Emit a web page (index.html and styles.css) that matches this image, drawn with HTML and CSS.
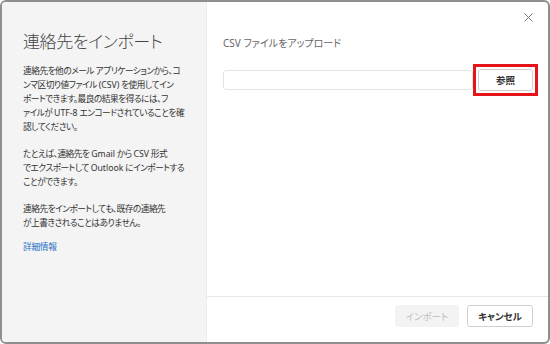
FILE: index.html
```html
<!DOCTYPE html>
<html lang="ja">
<head>
<meta charset="utf-8">
<title>連絡先をインポート</title>
<link rel="stylesheet" href="styles.css">
</head>
<body>
<div class="dialog">
  <aside class="side">
    <h1 class="title">連絡先をインポート</h1>
    <p class="para">連絡先を他のメール アプリケーションから、コ<br>ンマ区切り値ファイル <span class="lat">(CSV)</span> を使用してイン<br>ポートできます。最良の結果を得るには、フ<br>ァイルが <span class="lat">UTF-8</span> エンコードされていることを確<br>認してください。</p>
    <p class="para">たとえば、連絡先を <span class="lat">Gmail</span> から <span class="lat">CSV</span> 形式<br>でエクスポートして <span class="lat">Outlook</span> にインポートする<br>ことができます。</p>
    <p class="para">連絡先をインポートしても、既存の連絡先<br>が上書きされることはありません。</p>
    <a class="link" href="#">詳細情報</a>
  </aside>
  <main class="main">
    <div class="topbar">
      <button class="close" aria-label="閉じる">
        <svg width="9" height="9" viewBox="0 0 9 9"><path d="M0.5 0.5 L8.5 8.5 M8.5 0.5 L0.5 8.5" stroke="#7a7a7a" stroke-width="1" fill="none"/></svg>
      </button>
    </div>
    <div class="content">
      <div class="heading">CSV ファイルをアップロード</div>
      <div class="filerow">
        <div class="input"></div>
        <span class="highlight"><button class="btn browse">参照</button></span>
      </div>
    </div>
    <div class="footer">
      <button class="btn disabled">インポート</button>
      <button class="btn cancel">キャンセル</button>
    </div>
  </main>
</div>
</body>
</html>
```

FILE: styles.css
```css
* { box-sizing: border-box; }
html, body {
  margin: 0;
  padding: 0;
  background: #ffffff;
}
body {
  font-family: "Noto Sans", "Noto Sans CJK JP", sans-serif;
  font-feature-settings: "palt";
  color: #333333;
}
.dialog {
  width: 550px;
  height: 344px;
  display: flex;
  border: 2px solid #8e8e8e;
  border-radius: 6px;
  overflow: hidden;
  background: #ffffff;
}
.side {
  width: 205px;
  flex: none;
  background: #f4f4f4;
  border-right: 1px solid #ececec;
  padding: 28px 10px 0 21px;
}
.title {
  margin: 0 0 10px 0;
  font-size: 17px;
  line-height: 24px;
  font-weight: 300;
  letter-spacing: -0.4px;
  color: #444444;
  white-space: nowrap;
}
.para {
  margin: 0 0 13px 0;
  font-size: 8.7px;
  line-height: 14px;
  letter-spacing: -0.5px;
  color: #333333;
  white-space: nowrap;
}
.lat {
  letter-spacing: 0;
}
.link {
  display: block;
  margin-top: -3px;
  font-size: 8.7px;
  line-height: 14px;
  letter-spacing: -0.3px;
  color: #1d6fc5;
  text-decoration: none;
}
.main {
  flex: 1;
  display: flex;
  flex-direction: column;
}
.topbar {
  display: flex;
  justify-content: flex-end;
  padding: 8px 13px 0 0;
}
.close {
  width: 14px;
  height: 14px;
  padding: 0;
  border: none;
  background: transparent;
  display: flex;
  align-items: center;
  justify-content: center;
}
.content {
  padding: 12px 10px 0 16px;
}
.heading {
  font-size: 10px;
  line-height: 14px;
  color: #666666;
}
.filerow {
  margin-top: 14px;
  display: flex;
  align-items: center;
  gap: 0;
}
.input {
  flex: 1;
  height: 20px;
  border: 1px solid #e2e2e2;
  border-radius: 3px;
  background: #ffffff;
}
.highlight {
  display: flex;
  border: 3px solid #e5141b;
  padding: 2px;
}
.btn {
  height: 22px;
  border: 1px solid #cfcfcf;
  border-radius: 3px;
  background: #ffffff;
  font-family: "Noto Sans", "Noto Sans CJK JP", sans-serif;
  font-feature-settings: "palt";
  font-size: 9.5px;
  font-weight: 700;
  color: #333333;
  padding: 0;
}
.browse {
  width: 55px;
}
.footer {
  margin-top: auto;
  border-top: 1px solid #e8e8e8;
  padding: 8px 15px 15px 0;
  display: flex;
  justify-content: flex-end;
  gap: 8px;
}
.disabled {
  width: 64px;
  border-color: #f3f3f3;
  background: #f3f3f3;
  color: #bdbdbd;
  font-weight: 400;
}
.cancel {
  width: 66px;
}
```
